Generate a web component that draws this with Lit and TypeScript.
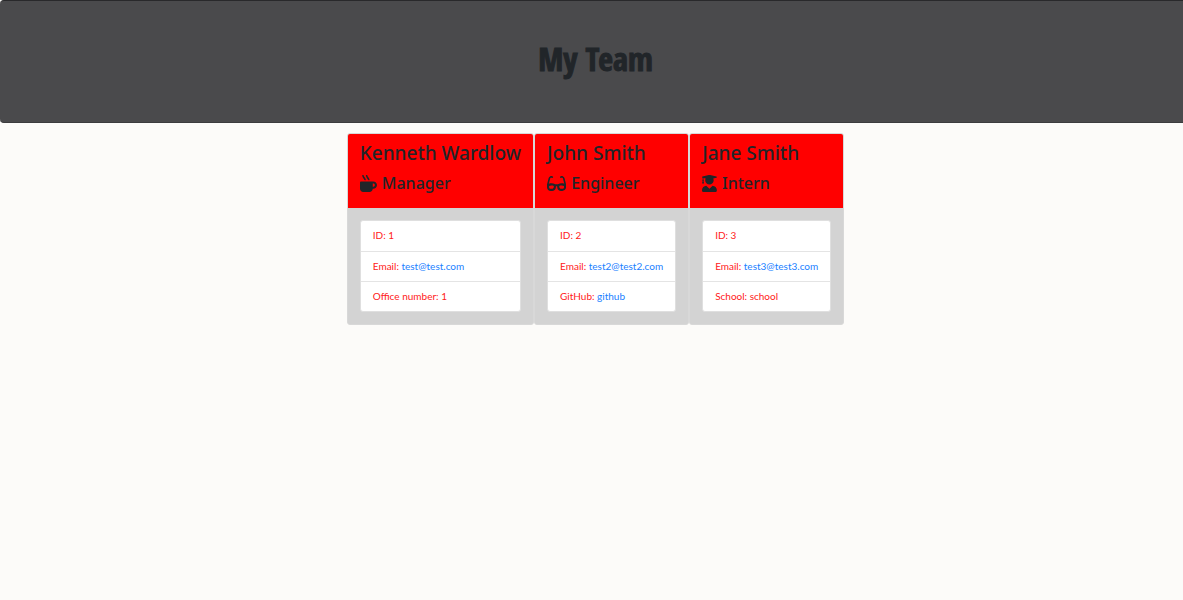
import { LitElement, html, css, svg } from "lit";
import { customElement, property } from "lit/decorators.js";

interface Field {
  label: string;
  value: string;
  href?: string;
}

interface Member {
  name: string;
  role: string;
  icon: string;
  fields: Field[];
}

const ICONS: Record<string, { width: number; path: string }> = {
  mug: {
    width: 512,
    path: "M127.1 146.5c1.3 7.7 8 13.5 16 13.5h16.5c9.8 0 17.6-8.5 16.3-18-3.8-28.2-16.4-54.2-36.6-74.7-14.4-14.7-23.6-33.3-26.4-53.5C111.8 5.9 105 0 96.8 0H80.4C70.6 0 63 8.5 64.1 18c3.9 31.9 18 61.3 40.6 84.4 12 12.2 19.7 27.5 22.4 44.1zm112 0c1.3 7.7 8 13.5 16 13.5h16.5c9.8 0 17.6-8.5 16.3-18-3.8-28.2-16.4-54.2-36.6-74.7-14.4-14.7-23.6-33.3-26.4-53.5C223.8 5.9 217 0 208.8 0h-16.4c-9.8 0-17.5 8.5-16.3 18 3.9 31.9 18 61.3 40.6 84.4 12 12.2 19.7 27.5 22.4 44.1zM400 192H32c-17.7 0-32 14.3-32 32v192c0 53 43 96 96 96h192c53 0 96-43 96-96h16c61.8 0 112-50.2 112-112s-50.2-112-112-112zm0 160h-16v-96h16c26.5 0 48 21.5 48 48s-21.5 48-48 48z",
  },
  glasses: {
    width: 576,
    path: "M574.1 280.37L528.75 98.66c-5.91-23.7-21.59-44.05-43-55.81-21.44-11.73-46.97-14.11-70.19-6.33l-15.25 5.08c-8.39 2.79-12.92 11.86-10.12 20.24l5.06 15.18c2.79 8.38 11.85 12.91 20.23 10.12l13.18-4.39c10.87-3.62 23-3.57 33.16 1.73 10.29 5.37 17.57 14.56 20.37 25.82l38.46 153.82c-22.19-6.81-49.79-12.46-81.2-12.46-34.77 0-73.98 7.02-114.85 26.74h-73.18c-40.87-19.74-80.08-26.75-114.86-26.75-31.42 0-59.02 5.65-81.21 12.46l38.46-153.83c2.79-11.25 10.09-20.45 20.38-25.81 10.16-5.3 22.28-5.35 33.15-1.73l13.17 4.39c8.38 2.79 17.44-1.74 20.23-10.12l5.06-15.18c2.8-8.38-1.73-17.45-10.12-20.24l-15.25-5.08c-23.22-7.78-48.75-5.41-70.19 6.33-21.41 11.77-37.09 32.11-43 55.8L1.9 280.37A64.218 64.218 0 0 0 0 295.86v70.25C0 429.01 51.58 480 115.2 480h37.12c60.28 0 110.37-45.94 114.88-105.37l2.93-38.63h35.75l2.93 38.63C313.31 434.06 363.4 480 423.68 480h37.12c63.62 0 115.2-50.99 115.2-113.88v-70.25c0-5.23-.64-10.43-1.9-15.5zm-370.72 89.42c-1.97 25.91-24.4 46.21-51.06 46.21H115.2C86.97 416 64 393.62 64 366.11v-37.54c18.12-6.49 43.42-12.92 72.58-12.92 23.86 0 47.26 4.33 69.93 12.92l-3.13 41.22zM512 366.12c0 27.51-22.97 49.88-51.2 49.88h-37.12c-26.67 0-49.1-20.3-51.06-46.21l-3.13-41.22c22.67-8.59 46.08-12.92 69.95-12.92 29.12 0 54.43 6.44 72.55 12.93v37.54z",
  },
  graduate: {
    width: 448,
    path: "M319.4 320.6L224 416l-95.4-95.4C57.1 323.7 0 382.2 0 454.4v9.6c0 26.5 21.5 48 48 48h352c26.5 0 48-21.5 48-48v-9.6c0-72.2-57.1-130.7-128.6-133.8zM13.6 79.8l6.4 1.5v58.4c-7 4.2-12 11.5-12 20.3 0 8.4 4.6 15.4 11.1 19.7L3.5 242c-1.7 6.9 2.1 14 7.6 14h41.8c5.5 0 9.3-7.1 7.6-14l-15.6-62.3C51.4 175.4 56 168.4 56 160c0-8.8-5-16.1-12-20.3V87.1l66 15.9c-8.6 17.2-14 36.4-14 57 0 70.7 57.3 128 128 128s128-57.3 128-128c0-20.6-5.3-39.8-14-57l96.3-23.2c18.2-4.4 18.2-27.1 0-31.5l-190.4-46c-13-3.1-26.7-3.1-39.7 0L13.6 48.2c-18.1 4.4-18.1 27.2 0 31.6z",
  },
};

const TEAM: Member[] = [
  {
    name: "Kenneth Wardlow",
    role: "Manager",
    icon: "mug",
    fields: [
      { label: "ID", value: "1" },
      { label: "Email", value: "test@test.com", href: "mailto:test@test.com" },
      { label: "Office number", value: "1" },
    ],
  },
  {
    name: "John Smith",
    role: "Engineer",
    icon: "glasses",
    fields: [
      { label: "ID", value: "2" },
      { label: "Email", value: "test2@test2.com", href: "mailto:test2@test2.com" },
      { label: "GitHub", value: "github", href: "https://github.com/github" },
    ],
  },
  {
    name: "Jane Smith",
    role: "Intern",
    icon: "graduate",
    fields: [
      { label: "ID", value: "3" },
      { label: "Email", value: "test3@test3.com", href: "mailto:test3@test3.com" },
      { label: "School", value: "school" },
    ],
  },
];

@customElement("team-card")
class TeamCard extends LitElement {
  @property({ attribute: false }) member!: Member;

  static styles = css`
    :host {
      display: block;
      box-sizing: border-box;
      border: 1px solid #d8d8d8;
      border-radius: 3px;
      background: #d3d3d3;
      overflow: hidden;
    }
    .head {
      padding: 7px 12px 13px;
      background: #ff0000;
      color: #212529;
    }
    .name,
    .role {
      margin: 0;
      font-weight: 500;
      white-space: nowrap;
    }
    .name {
      font-size: 19px;
      line-height: 24px;
    }
    .role {
      display: flex;
      align-items: center;
      gap: 5px;
      margin-top: 6px;
      font-size: 16px;
      line-height: 24px;
    }
    .icon {
      display: block;
      height: 17px;
      width: auto;
      fill: currentColor;
    }
    .body {
      padding: 12px;
    }
    .list {
      margin: 0;
      padding: 0;
      list-style: none;
      border: 1px solid #dfdfdf;
      border-radius: 3px;
      background: #ffffff;
    }
    .item {
      padding: 6px 12px 8px;
      font-family: "Segoe UI", Lato, sans-serif;
      font-size: 10px;
      line-height: 16px;
      color: #ff2020;
      white-space: nowrap;
    }
    .item + .item {
      padding-bottom: 7px;
      border-top: 1px solid #e4e4e4;
    }
    .link {
      color: #2080ff;
      text-decoration: none;
    }
  `;

  render() {
    const { name, role, icon, fields } = this.member;
    const glyph = ICONS[icon];
    return html`
      <div class="head">
        <h2 class="name">${name}</h2>
        <h3 class="role">
          <svg class="icon" viewBox="0 0 ${glyph.width} 512" aria-hidden="true">
            ${svg`<path d=${glyph.path}></path>`}
          </svg>
          <span>${role}</span>
        </h3>
      </div>
      <div class="body">
        <ul class="list">
          ${fields.map(
            (f) => html`<li class="item">
              ${f.label}:
              ${f.href ? html`<a class="link" href=${f.href}>${f.value}</a>` : f.value}
            </li>`
          )}
        </ul>
      </div>
    `;
  }
}

@customElement("app-root")
class AppRoot extends LitElement {
  static styles = css`
    :host {
      display: block;
      min-height: 100vh;
      overflow: hidden;
      background: #fcfbf9;
      font-family: "Segoe UI", "Noto Sans", "Open Sans", sans-serif;
    }
    /* The banner row bleeds past the right edge of the window. */
    .page {
      margin-right: -8px;
    }
    .banner {
      padding: 40px 20px 45px;
      border-top: 1px solid #29292b;
      border-bottom: 1px solid #3c3c3e;
      border-radius: 4px;
      background: #4a4a4c;
      text-align: center;
    }
    .title {
      margin: 0;
      color: #212529;
      font-family: Impact, "Noto Sans ExtraCondensed", "Open Sans Condensed", "Noto Sans Condensed", "Roboto Condensed", "Liberation Sans", sans-serif;
      font-size: 32px;
      font-weight: 900;
      line-height: 36px;
      -webkit-text-stroke: 1px currentColor;
    }
    .team {
      display: flex;
      flex-wrap: wrap;
      justify-content: center;
      padding-top: 10px;
    }
  `;

  render() {
    return html`
      <div class="page">
        <header class="banner"><h1 class="title">My Team</h1></header>
        <main class="team">
          ${TEAM.map((m) => html`<team-card .member=${m}></team-card>`)}
        </main>
      </div>
    `;
  }
}
